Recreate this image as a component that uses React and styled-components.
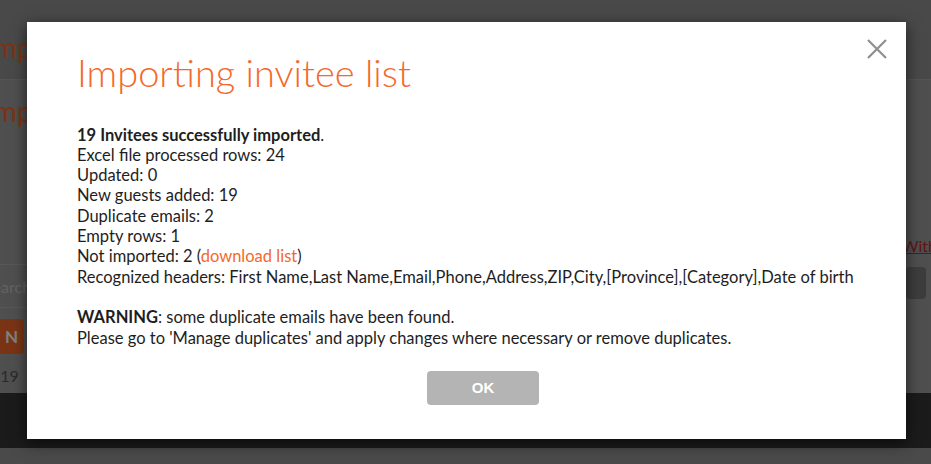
import React from "react";
import styled, { createGlobalStyle } from "styled-components";

const GlobalStyle = createGlobalStyle`
  html, body {
    margin: 0;
    padding: 0;
  }
  body {
    width: 931px;
    height: 464px;
    overflow: hidden;
    font-family: Lato, "Open Sans", sans-serif;
    color: #222;
  }
`;

const Page = styled.div`
  position: relative;
  width: 931px;
  height: 464px;
  display: flex;
  flex-direction: column;
  background: #9e9e9e;
  overflow: hidden;
`;

const Header = styled.header`
  height: 80px;
  flex-shrink: 0;
  background: #939393;
  border-bottom: 1px solid #a8a8a8;
  box-sizing: border-box;
  padding-top: 30px;
`;

const PageTitle = styled.div`
  font-size: 28px;
  color: #f4682a;
  margin-left: -14px;
  line-height: 34px;
`;

const Main = styled.main`
  flex: 1;
  display: flex;
  justify-content: space-between;
`;

const LeftCol = styled.div`
  width: 120px;
  display: flex;
  flex-direction: column;
  padding-top: 14px;
`;

const SubTitle = styled(PageTitle)`
  margin-bottom: 136px;
`;

const Search = styled.div`
  height: 42px;
  margin-left: -20px;
  border-top: 1px solid #b0b0b0;
  border-bottom: 1px solid #b0b0b0;
  font-size: 16px;
  color: #c4c4c4;
  display: flex;
  align-items: center;
  padding-left: 4px;
`;

const OrangeButton = styled.div`
  width: 42px;
  height: 35px;
  margin: 11px 0 0 -18px;
  background: #f4682a;
  border-radius: 4px;
  color: #fff;
  font-weight: 700;
  font-size: 17px;
  display: flex;
  align-items: center;
  justify-content: flex-end;
  padding-right: 6px;
  box-sizing: border-box;
`;

const Count = styled.div`
  margin: 12px 0 0 -18px;
  font-size: 16px;
  color: #555;
`;

const RightCol = styled.div`
  width: 30px;
  display: flex;
  flex-direction: column;
  align-items: flex-start;
  padding-top: 156px;
  white-space: nowrap;
`;

const WithLink = styled.a`
  font-size: 16px;
  color: #c22a2a;
  text-decoration: underline;
  margin-left: 1px;
`;

const FilterBtn = styled.div`
  width: 20px;
  height: 32px;
  margin: 12px 0 0 5px;
  background: #7a7a7a;
  border-radius: 4px;
`;

const Footer = styled.footer`
  height: 55px;
  flex-shrink: 0;
  background: #363636;
`;

const Bottom = styled.div`
  height: 16px;
  flex-shrink: 0;
  background: #949494;
`;

const Overlay = styled.div`
  position: absolute;
  inset: 0;
  background: rgba(0, 0, 0, 0.5);
`;

const Modal = styled.div`
  position: absolute;
  top: 22px;
  left: 27px;
  width: 879px;
  height: 417px;
  box-sizing: border-box;
  padding: 28px 40px 0 50px;
  background: #fff;
  box-shadow: 0 4px 14px rgba(0, 0, 0, 0.6);
  display: flex;
  flex-direction: column;
`;

const Close = styled.button`
  position: absolute;
  top: 16px;
  right: 18px;
  width: 22px;
  height: 22px;
  padding: 0;
  border: 0;
  background: none;
  cursor: pointer;
`;

const Title = styled.h2`
  margin: 0;
  font-family: Lato, sans-serif;
  font-weight: 300;
  font-size: 38px;
  line-height: 1.2;
  color: #f4692b;
`;

const Body = styled.div`
  margin-top: 29px;
  font-size: 16.5px;
  line-height: 20.3px;
  color: #1e1e1e;
`;

const Line = styled.div`
  margin-top: ${(p) => (p.$gap ? "20.3px" : "0")};
`;

const Link = styled.a`
  color: #f4692b;
  text-decoration: none;
`;

const Actions = styled.div`
  display: flex;
  justify-content: center;
  padding-left: 23px;
  margin-top: 23px;
`;

const OkButton = styled.button`
  width: 112px;
  height: 34px;
  border: 0;
  border-radius: 4px;
  background: #b4b4b4;
  color: #fff;
  font-family: "Liberation Sans", Arial, sans-serif;
  font-weight: 700;
  font-size: 15px;
  cursor: pointer;
`;

const App = () => {
  return (
    <>
      <GlobalStyle />
      <Page>
        <Header>
          <PageTitle>Imp</PageTitle>
        </Header>
        <Main>
          <LeftCol>
            <SubTitle>Imp</SubTitle>
            <Search>Search</Search>
            <OrangeButton>N</OrangeButton>
            <Count>of 19</Count>
          </LeftCol>
          <RightCol>
            <WithLink>With</WithLink>
            <FilterBtn />
          </RightCol>
        </Main>
        <Footer />
        <Bottom />
        <Overlay />
        <Modal>
          <Close aria-label="Close">
            <svg width="22" height="22" viewBox="0 0 22 22">
              <path
                d="M2 2 L20 20 M20 2 L2 20"
                stroke="#8f8f8f"
                strokeWidth="2.2"
                fill="none"
              />
            </svg>
          </Close>
          <Title>Importing invitee list</Title>
          <Body>
            <Line>
              <b>19 Invitees successfully imported</b>.
            </Line>
            <Line>Excel file processed rows: 24</Line>
            <Line>Updated: 0</Line>
            <Line>New guests added: 19</Line>
            <Line>Duplicate emails: 2</Line>
            <Line>Empty rows: 1</Line>
            <Line>
              Not imported: 2 (<Link href="#">download list</Link>)
            </Line>
            <Line>
              Recognized headers: First Name,Last Name,Email,Phone,Address,ZIP,City,[Province],[Category],Date
              of birth
            </Line>
            <Line $gap>
              <b>WARNING</b>: some duplicate emails have been found.
            </Line>
            <Line>
              Please go to 'Manage duplicates' and apply changes where necessary or remove duplicates.
            </Line>
          </Body>
          <Actions>
            <OkButton>OK</OkButton>
          </Actions>
        </Modal>
      </Page>
    </>
  );
};

export default App;
